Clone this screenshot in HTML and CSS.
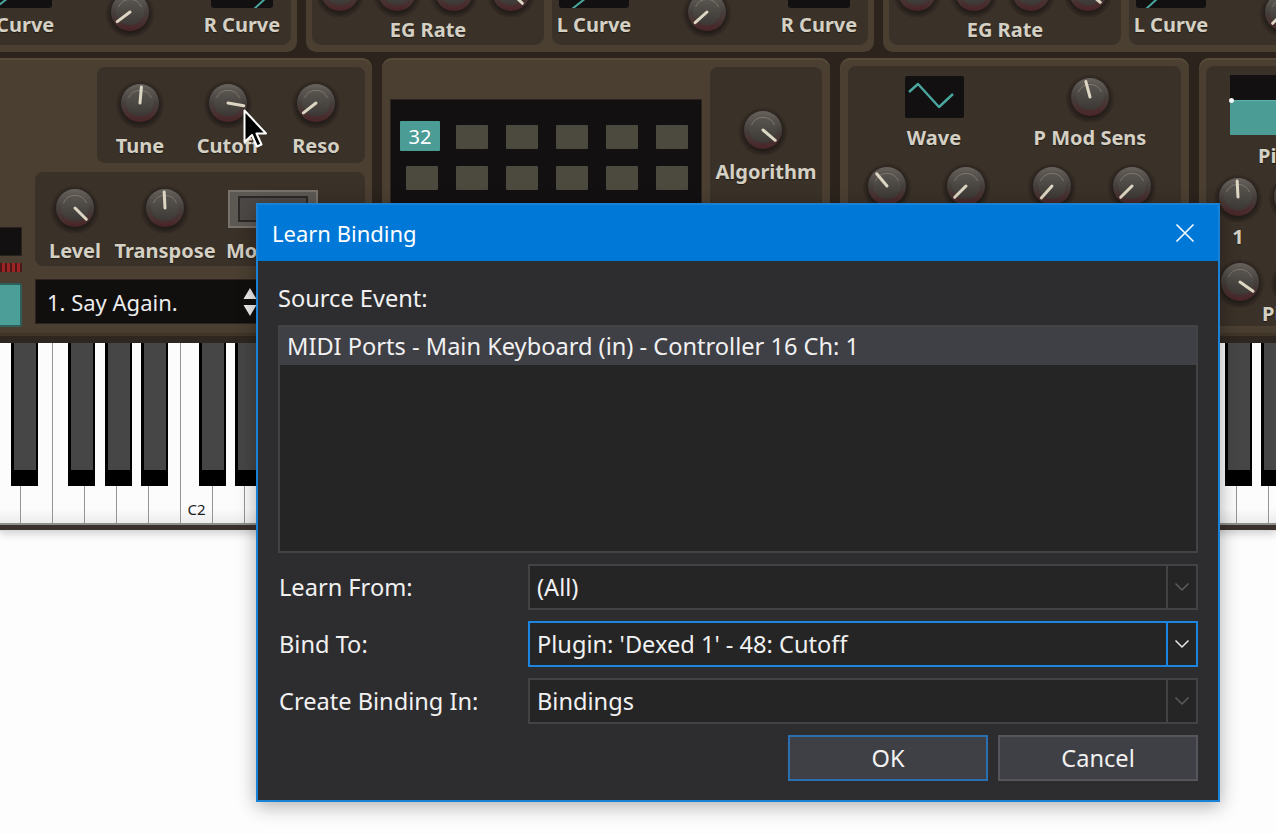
FILE: index.html
```html
<!DOCTYPE html>
<html lang="en">
<head>
<meta charset="utf-8">
<title>Learn Binding</title>
<link rel="stylesheet" href="styles.css">
</head>
<body>
<svg class="defs" width="0" height="0" aria-hidden="true">
  <defs>
    <radialGradient id="kg-ring" cx="50%" cy="52%" r="50%">
      <stop offset="0.72" stop-color="#221c18"/>
      <stop offset="1" stop-color="#221c18" stop-opacity="0"/>
    </radialGradient>
    <linearGradient id="kg-body" x1="0" y1="0" x2="0" y2="1">
      <stop offset="0" stop-color="#67625c"/>
      <stop offset="0.5" stop-color="#45403c"/>
      <stop offset="1" stop-color="#4a2427"/>
    </linearGradient>
    <linearGradient id="kg-face" x1="0" y1="0" x2="0" y2="1">
      <stop offset="0" stop-color="#5b5752"/>
      <stop offset="1" stop-color="#3c3835"/>
    </linearGradient>
    <symbol id="knob" viewBox="0 0 50 50">
      <circle cx="25" cy="26" r="25" fill="url(#kg-ring)"/>
      <circle cx="25" cy="25" r="19" fill="url(#kg-body)"/>
      <circle cx="25" cy="24" r="14" fill="url(#kg-face)"/>
      <path d="M13.5 20 A12.5 12.5 0 0 1 36.5 20" fill="none" stroke="#a39b86" stroke-opacity=".5" stroke-width="1"/>
    </symbol>
  </defs>
</svg>

<div class="synth">
  <div class="row-top">
    <div class="panel first">
      <div class="sub curve">
        <div class="ctl cl">
          <div class="mini-disp l"><svg width="70" height="8" viewBox="0 0 70 8"><path d="M12 9 L26 -2" stroke="#4aa79f" stroke-width="2"/></svg></div>
          <div class="lbl">L Curve</div>
        </div>
        <svg class="knob" viewBox="0 0 50 50"><use href="#knob"/><line x1="25" y1="25" x2="25" y2="9" transform="rotate(233 25 25)"/></svg>
        <div class="ctl cr">
          <div class="mini-disp r"><svg width="62" height="8" viewBox="0 0 62 8"><path d="M43 9 L55 -2" stroke="#4aa79f" stroke-width="2"/></svg></div>
          <div class="lbl">R Curve</div>
        </div>
      </div>
    </div>
    <div class="panel">
      <div class="sub eg">
        <div class="knobs">
          <svg class="knob" viewBox="0 0 50 50"><use href="#knob"/><line x1="25" y1="25" x2="25" y2="9" transform="rotate(0 25 25)"/></svg>
          <svg class="knob" viewBox="0 0 50 50"><use href="#knob"/><line x1="25" y1="25" x2="25" y2="9" transform="rotate(-20 25 25)"/></svg>
          <svg class="knob" viewBox="0 0 50 50"><use href="#knob"/><line x1="25" y1="25" x2="25" y2="9" transform="rotate(10 25 25)"/></svg>
          <svg class="knob" viewBox="0 0 50 50"><use href="#knob"/><line x1="25" y1="25" x2="25" y2="9" transform="rotate(135 25 25)"/></svg>
        </div>
        <div class="lbl">EG Rate</div>
      </div>
      <div class="sub curve">
        <div class="ctl cl">
          <div class="mini-disp l"><svg width="70" height="8" viewBox="0 0 70 8"><path d="M13 9 L27 -2" stroke="#4aa79f" stroke-width="2"/></svg></div>
          <div class="lbl">L Curve</div>
        </div>
        <svg class="knob" viewBox="0 0 50 50"><use href="#knob"/><line x1="25" y1="25" x2="25" y2="9" transform="rotate(228 25 25)"/></svg>
        <div class="ctl cr">
          <div class="mini-disp r"></div>
          <div class="lbl">R Curve</div>
        </div>
      </div>
    </div>
    <div class="panel">
      <div class="sub eg">
        <div class="knobs">
          <svg class="knob" viewBox="0 0 50 50"><use href="#knob"/><line x1="25" y1="25" x2="25" y2="9" transform="rotate(0 25 25)"/></svg>
          <svg class="knob" viewBox="0 0 50 50"><use href="#knob"/><line x1="25" y1="25" x2="25" y2="9" transform="rotate(0 25 25)"/></svg>
          <svg class="knob" viewBox="0 0 50 50"><use href="#knob"/><line x1="25" y1="25" x2="25" y2="9" transform="rotate(0 25 25)"/></svg>
          <svg class="knob" viewBox="0 0 50 50"><use href="#knob"/><line x1="25" y1="25" x2="25" y2="9" transform="rotate(130 25 25)"/></svg>
        </div>
        <div class="lbl">EG Rate</div>
      </div>
      <div class="sub curve">
        <div class="ctl cl">
          <div class="mini-disp l"><svg width="70" height="8" viewBox="0 0 70 8"><path d="M10 9 L22 -2" stroke="#4aa79f" stroke-width="2"/></svg></div>
          <div class="lbl">L Curve</div>
        </div>
        <svg class="knob" viewBox="0 0 50 50"><use href="#knob"/><line x1="25" y1="25" x2="25" y2="9" transform="rotate(225 25 25)"/></svg>
        <div class="ctl cr">
          <div class="mini-disp r"></div>
          <div class="lbl">R Curve</div>
        </div>
      </div>
    </div>
  </div>

  <div class="row-mid">
    <div class="panel m1">
      <div class="m1-left">
        <div class="lcd-small"></div>
        <div class="leds"></div>
        <div class="teal-btn"></div>
      </div>
      <div class="m1-right">
        <div class="sub tcr">
          <div class="ctl mid-ctl">
            <svg class="knob" viewBox="0 0 50 50"><use href="#knob"/><line x1="25" y1="25" x2="25" y2="9" transform="rotate(5 25 25)"/></svg>
            <div class="lbl">Tune</div>
          </div>
          <div class="ctl mid-ctl">
            <svg class="knob" viewBox="0 0 50 50"><use href="#knob"/><line x1="25" y1="25" x2="25" y2="9" transform="rotate(100 25 25)"/></svg>
            <div class="lbl">Cutoff</div>
          </div>
          <div class="ctl mid-ctl">
            <svg class="knob" viewBox="0 0 50 50"><use href="#knob"/><line x1="25" y1="25" x2="25" y2="9" transform="rotate(232 25 25)"/></svg>
            <div class="lbl">Reso</div>
          </div>
        </div>
        <div class="sub lvl">
          <div class="ctl mid-ctl c1">
            <svg class="knob" viewBox="0 0 50 50"><use href="#knob"/><line x1="25" y1="25" x2="25" y2="9" transform="rotate(135 25 25)"/></svg>
            <div class="lbl">Level</div>
          </div>
          <div class="ctl mid-ctl c2">
            <svg class="knob" viewBox="0 0 50 50"><use href="#knob"/><line x1="25" y1="25" x2="25" y2="9" transform="rotate(-3 25 25)"/></svg>
            <div class="lbl">Transpose</div>
          </div>
          <div class="ctl mid-ctl c3">
            <div class="switch"><div class="switch-in"></div></div>
            <div class="lbl">Mono</div>
          </div>
        </div>
        <div class="preset">
          <span>1. Say Again.</span>
          <svg class="updown" width="14" height="30" viewBox="0 0 14 30"><path d="M7 1 L13.5 12 H0.5 Z M7 29 L13.5 18 H0.5 Z" fill="#ececec"/></svg>
        </div>
      </div>
    </div>

    <div class="panel m2">
      <div class="voice-disp">
        <div class="ops">
          <div class="op on">32</div>
          <div class="op"></div><div class="op"></div><div class="op"></div><div class="op"></div><div class="op"></div>
          <div class="op"></div><div class="op"></div><div class="op"></div><div class="op"></div><div class="op"></div><div class="op"></div>
        </div>
      </div>
      <div class="sub alg">
        <svg class="knob" viewBox="0 0 50 50"><use href="#knob"/><line x1="25" y1="25" x2="25" y2="9" transform="rotate(130 25 25)"/></svg>
        <div class="lbl">Algorithm</div>
      </div>
    </div>

    <div class="panel m3">
      <div class="sub lfo">
        <div class="lfo-top">
          <div class="ctl wave-ctl">
            <div class="wave-disp"><svg width="59" height="42" viewBox="0 0 59 42"><polyline points="4,16 13,8 34,31 48,18" fill="none" stroke="#4aa79f" stroke-width="2.4" stroke-linejoin="round"/></svg></div>
            <div class="lbl">Wave</div>
          </div>
          <div class="ctl pmod">
            <svg class="knob" viewBox="0 0 50 50"><use href="#knob"/><line x1="25" y1="25" x2="25" y2="9" transform="rotate(-15 25 25)"/></svg>
            <div class="lbl">P Mod Sens</div>
          </div>
        </div>
        <div class="lfo-knobs">
          <svg class="knob" viewBox="0 0 50 50"><use href="#knob"/><line x1="25" y1="25" x2="25" y2="9" transform="rotate(-40 25 25)"/></svg>
          <svg class="knob" viewBox="0 0 50 50"><use href="#knob"/><line x1="25" y1="25" x2="25" y2="9" transform="rotate(225 25 25)"/></svg>
          <svg class="knob" viewBox="0 0 50 50"><use href="#knob"/><line x1="25" y1="25" x2="25" y2="9" transform="rotate(222 25 25)"/></svg>
          <svg class="knob" viewBox="0 0 50 50"><use href="#knob"/><line x1="25" y1="25" x2="25" y2="9" transform="rotate(225 25 25)"/></svg>
        </div>
      </div>
    </div>

    <div class="panel m4">
      <div class="sub pitch">
        <div class="pitch-disp"><div class="pitch-fill"></div></div>
        <div class="lbl pl1">Pitch EG</div>
        <div class="prow r1">
          <svg class="knob" viewBox="0 0 50 50"><use href="#knob"/><line x1="25" y1="25" x2="25" y2="9" transform="rotate(-3 25 25)"/></svg>
          <svg class="knob" viewBox="0 0 50 50"><use href="#knob"/><line x1="25" y1="25" x2="25" y2="9" transform="rotate(0 25 25)"/></svg>
        </div>
        <div class="lbl pl2">1</div>
        <div class="prow r2">
          <svg class="knob" viewBox="0 0 50 50"><use href="#knob"/><line x1="25" y1="25" x2="25" y2="9" transform="rotate(125 25 25)"/></svg>
          <svg class="knob" viewBox="0 0 50 50"><use href="#knob"/><line x1="25" y1="25" x2="25" y2="9" transform="rotate(0 25 25)"/></svg>
        </div>
        <div class="lbl pl3">Pitch EG Level</div>
      </div>
    </div>
  </div>
</div>

<div class="keyboard">
  <div class="keys">
    <div class="wk bk d"></div><div class="wk"></div><div class="wk bk f"></div><div class="wk bk g"></div><div class="wk bk a"></div><div class="wk"></div><div class="wk bk c"><span class="note">C2</span></div>
    <div class="wk bk d"></div><div class="wk"></div><div class="wk bk f"></div><div class="wk bk g"></div><div class="wk bk a"></div><div class="wk"></div><div class="wk bk c"></div>
    <div class="wk bk d"></div><div class="wk"></div><div class="wk bk f"></div><div class="wk bk g"></div><div class="wk bk a"></div><div class="wk"></div><div class="wk bk c"></div>
    <div class="wk bk d"></div><div class="wk"></div><div class="wk bk f"></div><div class="wk bk g"></div><div class="wk bk a"></div><div class="wk"></div><div class="wk bk c"></div>
    <div class="wk bk d"></div><div class="wk"></div><div class="wk bk f"></div><div class="wk bk g"></div><div class="wk bk a"></div><div class="wk"></div><div class="wk bk c"></div>
    <div class="wk bk d"></div><div class="wk"></div><div class="wk bk f"></div><div class="wk bk g"></div><div class="wk bk a"></div><div class="wk"></div>
  </div>
  <div class="kb-bottom"></div>
</div>

<svg class="cursor" width="26" height="40" viewBox="0 0 26 40" aria-hidden="true"><path d="M1.5 1.5 V33 L9 26 L14 37.5 L18.5 35.5 L13.5 24.5 L23 24.5 Z" fill="#000" stroke="#fff" stroke-width="2" stroke-linejoin="round"/></svg>

<div class="dialog">
  <div class="titlebar">
    <span>Learn Binding</span>
    <svg class="close" width="20" height="20" viewBox="0 0 20 20"><path d="M1.5 1.5 L18.5 18.5 M18.5 1.5 L1.5 18.5" stroke="#fff" stroke-width="1.6"/></svg>
  </div>
  <div class="dlg-body">
    <div class="src-label">Source Event:</div>
    <div class="listbox">
      <div class="item">MIDI Ports - Main Keyboard (in) - Controller 16 Ch: 1</div>
    </div>
    <div class="form">
      <div class="flabel">Learn From:</div>
      <div class="combo">
        <div class="val">(All)</div>
        <div class="drop"><svg width="16" height="10" viewBox="0 0 16 10"><path d="M1.5 1.5 L8 8 L14.5 1.5" fill="none" stroke="currentColor" stroke-width="1.5"/></svg></div>
      </div>
      <div class="flabel">Bind To:</div>
      <div class="combo focus">
        <div class="val">Plugin: 'Dexed 1' - 48: Cutoff</div>
        <div class="drop"><svg width="16" height="10" viewBox="0 0 16 10"><path d="M1.5 1.5 L8 8 L14.5 1.5" fill="none" stroke="currentColor" stroke-width="1.5"/></svg></div>
      </div>
      <div class="flabel">Create Binding In:</div>
      <div class="combo">
        <div class="val">Bindings</div>
        <div class="drop"><svg width="16" height="10" viewBox="0 0 16 10"><path d="M1.5 1.5 L8 8 L14.5 1.5" fill="none" stroke="currentColor" stroke-width="1.5"/></svg></div>
      </div>
    </div>
    <div class="buttons">
      <div class="btn default">OK</div>
      <div class="btn">Cancel</div>
    </div>
  </div>
</div>
</body>
</html>
```

FILE: styles.css
```css
* { box-sizing: border-box; }
html, body { margin: 0; padding: 0; }
body {
  width: 1276px;
  height: 834px;
  overflow: hidden;
  background: #fdfdfd;
  font-family: "Noto Sans", "DejaVu Sans", sans-serif;
  position: relative;
}
.defs { position: absolute; width: 0; height: 0; overflow: hidden; }

/* ---------- synth background ---------- */
.synth {
  background: #2b231c;
  height: 333px;
  overflow: hidden;
  display: flex;
  flex-direction: column;
  gap: 6px;
}
.row-top { display: flex; gap: 9px; height: 52px; flex-shrink: 0; }
.row-mid { display: flex; gap: 10px; height: 275px; flex-shrink: 0; }

.panel { background: #4a3f31; display: flex; flex-shrink: 0; }
.row-top .panel { border-radius: 0 0 10px 10px; padding: 0 6px 7px; gap: 8px; }
.row-top .panel.first { margin-left: -31px; }
.sub { background: #3a3128; flex-shrink: 0; }
.row-top .sub { border-radius: 0 0 9px 9px; height: 45px; }

.knob { width: 50px; height: 50px; flex-shrink: 0; display: block; overflow: visible; }
.knob line { stroke: #ddd6c2; stroke-width: 3; stroke-linecap: round; }

.ctl { display: flex; flex-direction: column; align-items: center; flex-shrink: 0; }
.lbl {
  font-family: "Noto Sans", "DejaVu Sans", sans-serif;
  font-weight: 700;
  font-size: 20px;
  line-height: 22px;
  color: #d4d0c4;
  white-space: nowrap;
  text-shadow: 0 1px 1px rgba(0,0,0,.45);
}

/* curve sub-panels */
.curve { width: 316px; display: flex; }
.curve .cl { width: 84px; }
.curve .knob { margin-left: 46px; margin-top: -13px; }
.curve .cr { width: 84px; margin-left: 45px; }
.mini-disp { height: 8px; background: #121010; border-radius: 0 0 3px 3px; overflow: hidden; }
.mini-disp svg { display: block; }
.mini-disp.l { width: 70px; }
.mini-disp.r { width: 62px; }
.curve .lbl { margin-top: 6px; }

/* EG rate sub-panels */
.eg { width: 232px; display: flex; flex-direction: column; }
.eg .knobs { display: flex; gap: 7px; margin: -33px 0 0 3px; }
.eg .lbl { margin-top: 2px; text-align: center; }

/* middle row */
.row-mid .panel { border-radius: 10px 10px 0 0; box-shadow: inset 0 2px 0 #574a39; }
.row-mid .sub { border-radius: 8px; }

.m1 { width: 372px; padding-right: 7px; gap: 13px; border-top-left-radius: 0 !important; }
.m1-left { width: 22px; display: flex; flex-direction: column; }
.lcd-small { margin-top: 169px; height: 29px; background: #121010; border: 1px solid #2a231d; border-left: 0; }
.leds {
  margin-top: 7px;
  height: 9px;
  background: repeating-linear-gradient(90deg, #4a1818 0 2px, #9c2424 2px 5px);
}
.teal-btn {
  margin-top: 11px;
  height: 44px;
  background: #4c9f98;
  border: 2px solid #2f5f5a;
  border-left: 0;
  border-radius: 0 3px 3px 0;
}
.m1-right { width: 330px; padding-top: 9px; display: flex; flex-direction: column; }
.tcr { margin-left: 62px; width: 268px; height: 96px; display: flex; gap: 8px; padding-left: 3px; }
.tcr .ctl { width: 80px; }
.mid-ctl .knob { margin-top: 11px; }
.mid-ctl .lbl { margin-top: 6px; line-height: 24px; }
.lvl { margin-top: 9px; width: 330px; height: 94px; display: flex; padding-left: 2px; gap: 2px; }
.lvl .c1 { width: 76px; }
.lvl .c2 { width: 100px; }
.lvl .c3 { width: 110px; margin-left: 9px; align-items: flex-start; }
.switch {
  margin: 18px 0 5px 2px;
  width: 90px;
  height: 38px;
  background: #5c5853;
  border: 2px solid #77726b;
  padding: 4px 8px;
}
.switch-in { height: 100%; background: #4b4845; border: 2px solid #2b2927; }
.preset {
  margin-top: 13px;
  width: 232px;
  height: 45px;
  background: #110f0e;
  border: 1px solid #2c251f;
  display: flex;
  align-items: center;
  padding: 0 9px 0 11px;
  color: #ececec;
  font-size: 22px;
}
.updown { margin-left: auto; display: block; }

.m2 { width: 448px; padding: 0 8px; gap: 8px; }
.voice-disp {
  width: 312px;
  height: 160px;
  margin-top: 41px;
  background: #121011;
  border: 1px solid #2a2420;
  padding: 25px 0 0 15px;
}
.ops { display: grid; grid-template-columns: repeat(6, 32px); grid-auto-rows: 24px; column-gap: 18px; row-gap: 17px; }
.op { background: #4c493e; border-radius: 1px; }
.op.on {
  background: #4a9c95;
  margin: -4px -2px -2px -6px;
  color: #fff;
  font-size: 20px;
  display: flex;
  align-items: center;
  justify-content: center;
}
.alg { width: 112px; margin-top: 9px; height: 200px; display: flex; flex-direction: column; align-items: center; }
.alg .knob { margin-top: 38px; margin-left: -6px; }
.alg .lbl { margin-top: 5px; line-height: 24px; }

.m3 { width: 349px; padding: 8px 8px 0; }
.lfo { width: 333px; height: 250px; display: flex; flex-direction: column; }
.lfo-top { display: flex; }
.wave-ctl { width: 120px; margin-left: 26px; }
.wave-disp { margin-top: 10px; width: 59px; height: 42px; background: #121010; border-radius: 2px; }
.wave-disp svg { display: block; }
.wave-ctl .lbl { margin-top: 8px; line-height: 24px; }
.pmod { width: 140px; margin-left: 26px; }
.pmod .knob { margin-top: 6px; }
.pmod .lbl { margin-top: 4px; line-height: 24px; }
.lfo-knobs { display: flex; margin: 11px 0 0 14px; gap: 29px; }
.lfo-knobs .knob:nth-child(3) { margin-left: 7px; }
.lfo-knobs .knob:nth-child(4) { margin-left: 1px; }

.m4 { width: 200px; padding: 8px 0 0 7px; }
.pitch { width: 300px; height: 260px; display: flex; flex-direction: column; }
.pitch-disp {
  margin: 9px 0 0 24px;
  width: 150px;
  height: 61px;
  background: #121010;
  padding-top: 25px;
}
.pitch-fill { height: 100%; background: #4a9c95; border-top: 1px solid #5fb3ab; position: relative; }
.pitch-fill::before {
  content: "";
  position: absolute;
  left: -1px;
  top: -3px;
  width: 5px;
  height: 5px;
  border-radius: 50%;
  background: #f4f4f4;
}
.pl1 { margin: 9px 0 0 52px; line-height: 24px; }
.prow { display: flex; gap: 5px; }
.prow.r1 { margin: 4px 0 0 7px; }
.pl2 { margin: 3px 0 0 7px; width: 50px; text-align: center; line-height: 24px; }
.prow.r2 { margin: 8px 0 0 9px; }
.pl3 { margin: -5px 0 0 56px; line-height: 24px; }

/* ---------- keyboard ---------- */
.keyboard {
  height: 198px;
  background: #2e2620;
  border-top: 3px solid #3f3529;
  padding-top: 7px;
  display: flex;
  flex-direction: column;
  box-shadow: 0 3px 8px rgba(0,0,0,.18);
  position: relative;
}
.keys { display: flex; height: 180px; margin-left: -11px; }
.wk {
  width: 32px;
  flex-shrink: 0;
  position: relative;
  border-right: 1px solid #949494;
  background: linear-gradient(#fcfcfc 92%, #ececec);
  display: flex;
  align-items: flex-end;
  justify-content: center;
}
.wk.bk::after {
  content: "";
  position: absolute;
  z-index: 1;
  top: 0;
  width: 22px;
  height: 127px;
  background: #464646;
  border-style: solid;
  border-color: #000;
  border-width: 0 2px 16px 3px;
}
.wk.c::after { left: 18px; }
.wk.d::after { left: 22px; }
.wk.f::after { left: 15px; }
.wk.g::after { left: 20px; }
.wk.a::after { left: 24px; }
.note {
  font-family: "Noto Sans", sans-serif;
  font-size: 15px;
  line-height: 18px;
  color: #1c1c1c;
  margin-bottom: 5px;
}
.kb-bottom {
  height: 8px;
  background: #3b312c;
  border-top: 2px solid #8e8e8e;
  border-bottom: 1px solid #d9d9d9;
}

/* ---------- cursor ---------- */
.cursor { position: absolute; left: 243px; top: 109px; z-index: 5; }

/* ---------- dialog ---------- */
.dialog {
  position: absolute;
  left: 256px;
  top: 203px;
  width: 964px;
  height: 599px;
  border: 2px solid #1a82d6;
  background: #2d2d30;
  box-shadow: 0 4px 18px rgba(0,0,0,.32);
  display: flex;
  flex-direction: column;
  color: #f1f1f1;
  z-index: 10;
}
.titlebar {
  height: 56px;
  background: #0078d7;
  display: flex;
  align-items: center;
  padding-left: 14px;
  font-size: 22px;
  color: #fff;
}
.close { margin-left: auto; margin-right: 23px; display: block; }
.dlg-body { padding: 22px 20px 19px; display: flex; flex-direction: column; font-size: 23.6px; }
.src-label { line-height: 30px; }
.listbox { margin-top: 12px; height: 228px; border: 2px solid #434346; background: #252526; }
.listbox .item { height: 38px; line-height: 38px; background: #3f3f46; padding-left: 7px; white-space: nowrap; }
.form { margin-top: 11px; display: grid; grid-template-columns: 250px 1fr; row-gap: 11px; align-items: center; }
.flabel { padding-left: 1px; line-height: 30px; }
.combo { height: 46px; border: 2px solid #434346; background: #252526; display: flex; }
.combo .val { flex: 1; padding-left: 7px; line-height: 42px; white-space: nowrap; }
.combo .drop {
  width: 30px;
  border-left: 2px solid #434346;
  display: flex;
  align-items: center;
  justify-content: center;
  color: #5d5d5f;
}
.combo .drop svg { display: block; }
.combo.focus { border-color: #1c86de; }
.combo.focus .drop { border-color: #1c86de; color: #e6e6e6; }
.buttons { margin-top: 11px; display: flex; justify-content: flex-end; gap: 10px; }
.btn {
  width: 200px;
  height: 46px;
  background: #3f3f46;
  border: 2px solid #55555b;
  display: flex;
  align-items: center;
  justify-content: center;
}
.btn.default { border-color: #2a70b0; }
```
